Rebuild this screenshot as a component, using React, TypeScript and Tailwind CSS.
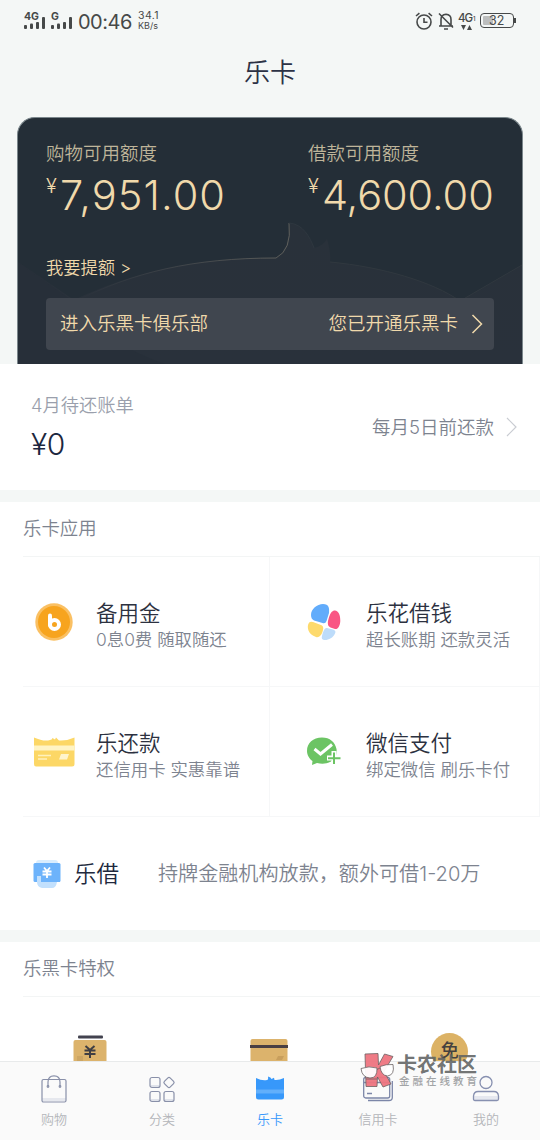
import type { ReactNode } from "react";

const apps = [
  { title: "备用金", desc: "0息0费 随取随还", icon: <CoinIcon /> },
  { title: "乐花借钱", desc: "超长账期 还款灵活", icon: <FlowerIcon /> },
  { title: "乐还款", desc: "还信用卡 实惠靠谱", icon: <RepayIcon /> },
  { title: "微信支付", desc: "绑定微信 刷乐卡付", icon: <WechatIcon /> },
];

const tabs = [
  { label: "购物", icon: <BagIcon /> },
  { label: "分类", icon: <GridIcon /> },
  { label: "乐卡", icon: <LekaIcon />, active: true },
  { label: "信用卡", icon: <CreditCardIcon /> },
  { label: "我的", icon: <UserIcon /> },
];

function Signal() {
  return (
    <svg width="22" height="13" viewBox="0 0 22 13" fill="#464949">
      <rect x="0" y="9" width="3" height="4" rx="1" />
      <rect x="6" y="7.5" width="3" height="5.5" rx="1" />
      <rect x="12" y="6" width="3" height="7" rx="1" />
      <rect x="18" y="1" width="3" height="12" rx="1" />
    </svg>
  );
}

function StatusBar() {
  return (
    <div className="flex h-11 items-start justify-between text-[#464949]">
      <div className="flex pl-6">
        <div className="relative mt-4 w-[27px]">
          <Signal />
          <span className="absolute -top-[5px] left-0 bg-[#f4f7f6] text-[10.5px] leading-[11px] font-bold">4G</span>
        </div>
        <div className="relative mt-4 w-[27px]">
          <Signal />
          <span className="absolute -top-[5px] left-0 bg-[#f4f7f6] text-[10.5px] leading-[11px] font-bold">G</span>
        </div>
        <span className="mt-[10px] w-[60px] text-[20px] leading-6 font-normal tracking-[-0.5px]">00:46</span>
        <div className="mt-[11px] flex flex-col text-[10.5px] leading-[10px] font-normal">
          <span className="tracking-[0.4px]">34.1</span>
          <span className="text-[9px]">KB/s</span>
        </div>
      </div>
      <div className="flex pt-3 pr-6">
        <svg width="18" height="19" viewBox="0 0 18 19" fill="none" stroke="#464949" strokeWidth="1.6">
          <circle cx="9" cy="10" r="7" />
          <path d="M9 6v4.3h3.5M1 4l3.4-2.8M17 4l-3.4-2.8" />
        </svg>
        <svg className="ml-1" width="18" height="19" viewBox="0 0 18 19" fill="none" stroke="#464949" strokeWidth="1.6">
          <path d="M2 14h14M4 14V7.5C4 4 6 2.5 9 2.3c3 .2 5 1.7 5 5.2V14M2 1.5l14 14M7 17h4" />
        </svg>
        <div className="relative ml-[3px] w-[19px]">
          <span className="absolute top-0 left-0 text-[11.5px] leading-3 font-medium tracking-[-1px]">4G</span>
          <span className="absolute top-[4px] left-[15px] text-[6px] leading-[6px] font-medium">1</span>
          <svg className="absolute top-[13px] left-[3px]" width="11" height="5" viewBox="0 0 11 5" fill="#464949">
            <path d="M0 0h5L2.5 5zM6 5h5L8.5 0z" />
          </svg>
        </div>
        <div className="mt-[1px] ml-[3px] flex h-[15px] w-[34px] rounded-[4px] border border-[#464949] p-[2px]">
          <div className="h-full w-[10px] rounded-[1px] bg-[#bcbebe]" />
          <span className="-ml-[4px] text-[12.5px] leading-[10px] font-normal">32</span>
        </div>
        <div className="mt-[6px] h-[5px] w-[2px] bg-[#464949]" />
      </div>
    </div>
  );
}

function Quota({ label, children }: { label: string; children: ReactNode }) {
  return (
    <div>
      <p className="text-[18.5px] leading-6 text-[#bfb59a]">{label}</p>
      <p className="mt-[6px] flex items-start text-[#f0d9ab]">
        <span className="w-[14px] pt-[3px] text-[20px] leading-6">¥</span>
        {children}
      </p>
    </div>
  );
}

function QuotaCard() {
  return (
    <div className="relative mx-[17px] h-[247px] overflow-hidden rounded-t-[18px] border border-b-0 border-[#7b878c] bg-[#242e37]">
      {/* Whale artwork */}
      <svg className="absolute inset-0" width="504" height="247" viewBox="0 0 504 247" fill="none">
        <defs>
          <linearGradient id="body" x1="0" y1="110" x2="0" y2="247" gradientUnits="userSpaceOnUse">
            <stop stopColor="#29313a" />
            <stop offset="1" stopColor="#29313b" />
          </linearGradient>
          <linearGradient id="edge" x1="60" y1="0" x2="290" y2="0" gradientUnits="userSpaceOnUse">
            <stop stopColor="#55575a" stopOpacity="0" />
            <stop offset="1" stopColor="#65655f" />
          </linearGradient>
        </defs>
        <path d="M0 144L56 182C115 154 175 140 258 140Q272 132 271 105C285 106 292 119 296 130Q305 128 309 121Q313 134 312 144C365 149 415 164 442 183L504 147V247H0Z" fill="url(#body)" />
        <path d="M56 184C115 154 175 140 258 140Q274 132 271 105" stroke="url(#edge)" />
        <path d="M271 105C285 106 292 119 296 130" stroke="#2e373f" />
        <path d="M312 144C365 149 415 164 442 183L504 147" stroke="#30383f" />
        <path d="M56 184Q90 228 150 247H0V144Z" fill="#252d37" opacity=".5" />
      </svg>
      <div className="relative flex h-full flex-col px-7 pt-[23px]">
        <div className="flex">
          <div className="w-[262px] shrink-0">
            <Quota label="购物可用额度">
              <span className="text-[41.5px] leading-[49px] tracking-[1.1px]">7,951.00</span>
            </Quota>
          </div>
          <Quota label="借款可用额度">
            <span className="text-[41.5px] leading-[49px] tracking-[-0.1px]">4,600.00</span>
          </Quota>
        </div>
        <p className="mt-9 text-[17.3px] leading-6 text-[#f0d9ab]">我要提额 &gt;</p>
        <div className="mt-[18px] flex h-[52px] items-center rounded-[4px] bg-[#40464f] pr-[11px] pl-[14px] text-[18.5px] text-[#f0d9ab]">
          <span>进入乐黑卡俱乐部</span>
          <span className="ml-auto">您已开通乐黑卡</span>
          <svg className="ml-[13px]" width="12" height="20" viewBox="0 0 12 20" fill="none" stroke="#f0d9ab" strokeWidth="1.5">
            <path d="M1.5 1l9 9-9 9" />
          </svg>
        </div>
      </div>
    </div>
  );
}

function SectionTitle({ children }: { children: ReactNode }) {
  return (
    <div className="ml-[23px] flex h-[55px] items-center border-b border-[#f3f5f5] text-[18.4px] text-[#7d838f]">
      {children}
    </div>
  );
}

function CoinIcon() {
  return (
    <svg width="42" height="42" viewBox="0 0 42 42">
      <circle cx="21" cy="21" r="18.7" fill="#fac063" />
      <circle cx="21" cy="21" r="16" fill="#f7a41e" />
      <path d="M17 14.5V24" stroke="#fff" strokeWidth="4" strokeLinecap="round" />
      <circle cx="21.5" cy="23.5" r="4.500" fill="none" stroke="#fff" strokeWidth="4" />
    </svg>
  );
}

function FlowerIcon() {
  return (
    <svg width="42" height="42" viewBox="0 0 42 42">
      <path d="M8 14C8 8 14 3 20 3C26 3 26.5 7 26 12L23.5 20Q22.500 23 19.500 22L11 19.500Q8 18 8 14Z" fill="#62acfb" />
      <path d="M30 10C35 8 37.500 14 37.300 20C37 25 35 28.500 32 28L27.500 26.500Q24 25 25 20Q27 11 30 10Z" fill="#f95684" />
      <path d="M5 24Q6 19.500 10 21L18 24Q21 25 20 29C19 34 16 37 13 36C7 34 4 29 5 24Z" fill="#fdda6d" />
      <path d="M24 27L30 28.500Q33.500 29.500 32 32.500C30 37 25 39.500 21 39Q18 38.500 19 35Q21 26 24 27Z" fill="#bddcfa" />
    </svg>
  );
}

function RepayIcon() {
  return (
    <svg width="42" height="42" viewBox="0 0 42 42">
      <path d="M1 6.500Q11 11 17 9Q19 9 19.500 7L22 8.500 23 6.500 26 9.500Q34 10 41.500 6.500V33Q41.500 35.500 39 35.500H3Q1 35.500 1 33Z" fill="#fcd766" />
      <path d="M1 14.500h40.500v5H1z" fill="#fff4c4" />
      <path d="M5 24.500h13M5 28h9" stroke="#fff1bd" strokeWidth="1.5" />
      <path d="M28 23h8l-2 5.500h-8z" fill="#fff4cc" />
    </svg>
  );
}

function WechatIcon() {
  return (
    <svg width="42" height="42" viewBox="0 0 42 42">
      <path d="M19 6.500C10 6.500 4 12 4 20C4 24 6.500 28 9.500 30L9 34 14 32C26 35 35 28 33.500 18C32 11 27 6.500 19 6.500Z" fill="#6cc464" />
      <path d="M11.500 18l6 5L29 13.500" fill="none" stroke="#fff" strokeWidth="3" />
      <path d="M31 20v14M24 27h14" stroke="#fff" strokeWidth="5" />
      <path d="M31 21.500v11.500M25 27.200h12.500" stroke="#6cc464" strokeWidth="2" />
    </svg>
  );
}

function LoanIcon() {
  return (
    <svg width="28" height="30" viewBox="0 0 28 30">
      <rect x="3" y="1" width="22" height="10" rx="3" fill="#d9edfe" />
      <rect x="0.5" y="4" width="27" height="19" rx="1.5" fill="#6db3fb" />
      <path d="M4 17h4v5h16v1Q23 29 19 29H9Q4 28 4 23Z" fill="#c2e0fd" />
      <path d="M8 17h19v6H8z" fill="#6db3fb" />
      <path d="M11 8.500l3 3.500 3-3.500M9.500 12.500h9M9.500 15.500h9M14 12v7" stroke="#fff" strokeWidth="1.8" fill="none" />
    </svg>
  );
}

function BagIcon() {
  return (
    <svg width="28" height="30" viewBox="0 0 28 30" fill="none" stroke="#8990a9" strokeWidth="1.2">
      <path d="M2 24h24v3H2z" fill="#e6e8ee" stroke="none" />
      <rect x="2" y="5.5" width="24" height="22.5" rx="1.5" />
      <path d="M8 12V8Q8 1.800 14 1.800Q20 1.800 20 8v4" />
      <circle cx="8" cy="12.5" r=".8" />
      <circle cx="20" cy="12.5" r=".8" />
    </svg>
  );
}

function GridIcon() {
  return (
    <svg width="28" height="30" viewBox="0 0 28 30" fill="none" stroke="#8990a9" strokeWidth="1.2">
      <path d="M3 12h8M3 26h8M17 26h8" stroke="#dfe2ea" strokeWidth="2" />
      <rect x="2" y="3.500" width="10" height="10" rx="2" />
      <rect x="17" y="4.500" width="8" height="8" rx="1.500" transform="rotate(45 21 8.500)" />
      <rect x="2" y="17.500" width="10" height="10" rx="2" />
      <rect x="16" y="17.500" width="10" height="10" rx="2" />
    </svg>
  );
}

function LekaIcon() {
  return (
    <svg width="28" height="30" viewBox="0 0 28 30">
      <path d="M0 4Q6 7 11 6Q12.500 6 12 2.500Q15 3 15.500 5L18 3.800 18.500 6Q23 6.500 28 4V23Q28 25.500 25.500 25.500H2.500Q0 25.500 0 23Z" fill="#3798fa" />
      <path d="M0 15.500h28v4H0z" fill="#62affb" />
    </svg>
  );
}

function CreditCardIcon() {
  return (
    <svg width="30" height="30" viewBox="0 0 30 30" fill="none" stroke="#7c86a8" strokeWidth="1.3">
      <path d="M5 26.500h21Q29.300 26.500 29.300 23.500V7" />
      <rect x="0.700" y="3.500" width="26" height="20.500" rx="2" />
      <path d="M1 8.500h26M4 19.500h5" />
    </svg>
  );
}

function UserIcon() {
  return (
    <svg width="28" height="30" viewBox="0 0 28 30" fill="none" stroke="#8790b0" strokeWidth="1.3">
      <circle cx="14" cy="8.500" r="6" />
      <path d="M2 22h24v4H2z" fill="#e6e8ef" stroke="none" />
      <path d="M1.500 25V22Q2 17.500 6 17.500H22Q26 17.500 26.500 22V25Q26.500 26.500 25 26.500H3Q1.500 26.500 1.500 25Z" />
    </svg>
  );
}

function Privileges() {
  return (
    <div className="flex h-16 justify-around pt-[38px] pl-px">
      <svg width="34" height="30" viewBox="0 0 34 30">
        <rect x="5" y="0.500" width="25" height="3" rx="1" fill="#42424f" />
        <rect x="0.500" y="5" width="33" height="30" rx="2" fill="#dcb36c" />
        <path d="M12.500 11l4.500 4 4.500-4M11.500 15.500h11M11.500 19h11M17 15v8" stroke="#3f3e43" strokeWidth="2" fill="none" />
        <path d="M4 21h6v6H4z" fill="#cda663" />
      </svg>
      <svg width="38" height="30" viewBox="0 0 38 30">
        <rect x="0.500" y="4" width="37" height="30" rx="2" fill="#dcb36c" />
        <path d="M0 10h38v3H0z" fill="#493f43" />
        <path d="M28 21h6l-2 4h-6z" fill="#c89f5d" />
      </svg>
      <div className="-mt-[2px] flex h-[37px] w-[37px] justify-center rounded-full bg-[#dcb265] pt-[6px] text-[18px] leading-6 font-medium text-[#45413f]">
        免
      </div>
    </div>
  );
}

function Watermark() {
  return (
    <div className="absolute top-[1052px] left-[360px] flex text-[#606263]/90">
      <svg width="36" height="37" viewBox="0 0 36 37" stroke="#6b6263" strokeWidth=".8" fill="#ee7480" fillOpacity=".95">
        <path d="M5 2L18 1.500 18.500 13 24.500 2 33 4.500 24 19.500 31 32 23 35 17.500 25 17 34.500 6 34.500Z" />
        <path d="M1 16.500Q9 13.500 17 16Q17.500 26 10 26Q2 25.500 1 16.500ZM20 14.500Q26 12 33 12.500Q35 23 27.500 24Q21 23.500 20 14.500Z" fill="#fff" />
        <path d="M17 17.500l3-1.500M6 27h11" fill="none" />
      </svg>
      <div className="pl-[1px]">
        <p className="pt-[1px] text-[20px] leading-6 font-bold">卡农社区</p>
        <p className="-mt-[2px] pl-[2px] text-[10.5px] leading-[13px] font-medium tracking-[3px] whitespace-nowrap text-[#a2a4a6]">金融在线教育</p>
      </div>
    </div>
  );
}

export default function App() {
  return (
    <div className="relative flex h-[1140px] w-[540px] flex-col overflow-hidden bg-[#f4f7f6] font-['Inter','Noto_Sans_CJK_SC',sans-serif] font-[350]">
      <StatusBar />
      <h1 className="h-[73px] pt-[11px] text-center text-[26px] leading-9 text-[#2c3245]">乐卡</h1>
      <QuotaCard />

      {/* Monthly bill */}
      <div className="flex h-[126px] items-center bg-white pr-[23px] pl-[31px]">
        <div className="-mt-[2px]">
          <p className="text-[18.3px] leading-6 text-[#9a9fac]">4月待还账单</p>
          <p className="mt-[11px] text-[30px] leading-8 tracking-[-0.5px] text-[#1c2740]">¥0</p>
        </div>
        <span className="ml-auto pt-[1px] text-[18.5px] text-[#7d838f]">每月5日前还款</span>
        <svg className="ml-3" width="11" height="20" viewBox="0 0 11 20" fill="none" stroke="#c9ccd2" strokeWidth="1.2">
          <path d="M1 1l9 9-9 9" />
        </svg>
      </div>

      {/* Card apps */}
      <div className="mt-3 h-[428px] shrink-0 bg-white">
        <SectionTitle>乐卡应用</SectionTitle>
        <div className="grid grid-cols-2">
          {apps.map((app) => (
            <div key={app.title} className="h-[130px] odd:pl-[23px]">
              <div className="flex h-full border-r border-b border-[#f6f7f8]">
                <div className="flex w-full items-center justify-end">
                  {app.icon}
                  <div className="ml-[21px] w-[173px] pt-2">
                    <p className="text-[21.5px] leading-7 text-[#2c3140]">{app.title}</p>
                    <p className="text-[17.4px] leading-[26px] whitespace-nowrap text-[#7d838f]">{app.desc}</p>
                  </div>
                </div>
              </div>
            </div>
          ))}
        </div>
        <div className="flex h-[113px] items-center pt-[1px] pl-[33px]">
          <LoanIcon />
          <span className="ml-[13px] w-[84px] text-[22.5px] text-[#20283d]">乐借</span>
          <span className="text-[20.1px] whitespace-nowrap text-[#7d838f]">持牌金融机构放款，额外可借1-20万</span>
        </div>
      </div>

      {/* Black card privileges */}
      <div className="mt-3 h-[119px] shrink-0 bg-white">
        <SectionTitle>乐黑卡特权</SectionTitle>
        <Privileges />
      </div>

      <nav className="relative flex h-[79px] shrink-0 border-t border-[#e8eaeb] bg-[#fafafa]">
        {tabs.map((tab) => (
          <div
            key={tab.label}
            className={`flex flex-1 flex-col items-center pt-3 text-[13px] ${tab.active ? "text-[#3798fa]" : "text-[#b3b5b9]"}`}
          >
            {tab.icon}
            <span className="mt-[5px] leading-5">{tab.label}</span>
          </div>
        ))}
      </nav>
      <Watermark />
    </div>
  );
}
